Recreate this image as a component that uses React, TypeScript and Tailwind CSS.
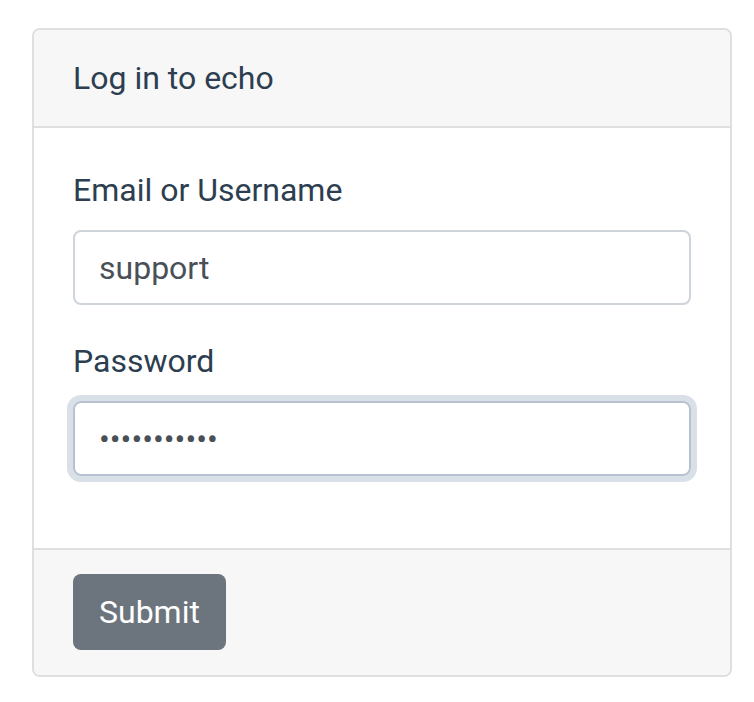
/* Log-in card: header, two fields (password focused), footer with submit. */

export default function App() {
  return (
    <div className="min-h-screen bg-white pt-[28px] pl-[32px] font-['Roboto','Liberation_Sans',sans-serif] text-[32px] leading-[48px] text-[#2c3e50]">
      <div className="w-[700px] overflow-hidden rounded-[8px] border-2 border-[#dfdfdf]">
        {/* header */}
        <div className="border-b-2 border-[#dfdfdf] bg-[#f7f7f7] px-[39px] py-[24px]">Log in to echo</div>

        {/* body */}
        <div className="bg-white px-[39px] pt-[38px] pb-[40px]">
          <div className="mb-[32px]">
            <label className="mb-[16px] block">Email or Username</label>
            <input
              readOnly
              value="support"
              className="block h-[75px] w-full rounded-[8px] border-2 border-[#ced4da] px-[24px] text-[32px] text-[#495057] outline-none"
            />
          </div>
          <div className="mb-[32px]">
            <label className="mb-[16px] block">Password</label>
            <input
              readOnly
              type="password"
              value="supportpass"
              className="block h-[75px] w-full rounded-[8px] border-2 border-[#b7c2d0] px-[24px] text-[32px] text-[#495057] shadow-[0_0_0_6px_#dae0e7] outline-none"
            />
          </div>
        </div>

        {/* footer */}
        <div className="border-t-2 border-[#dfdfdf] bg-[#f7f7f7] px-[39px] pt-[24px] pb-[25px]">
          <button className="h-[76px] rounded-[8px] bg-[#6c757d] px-[26px] text-white">Submit</button>
        </div>
      </div>
    </div>
  )
}
